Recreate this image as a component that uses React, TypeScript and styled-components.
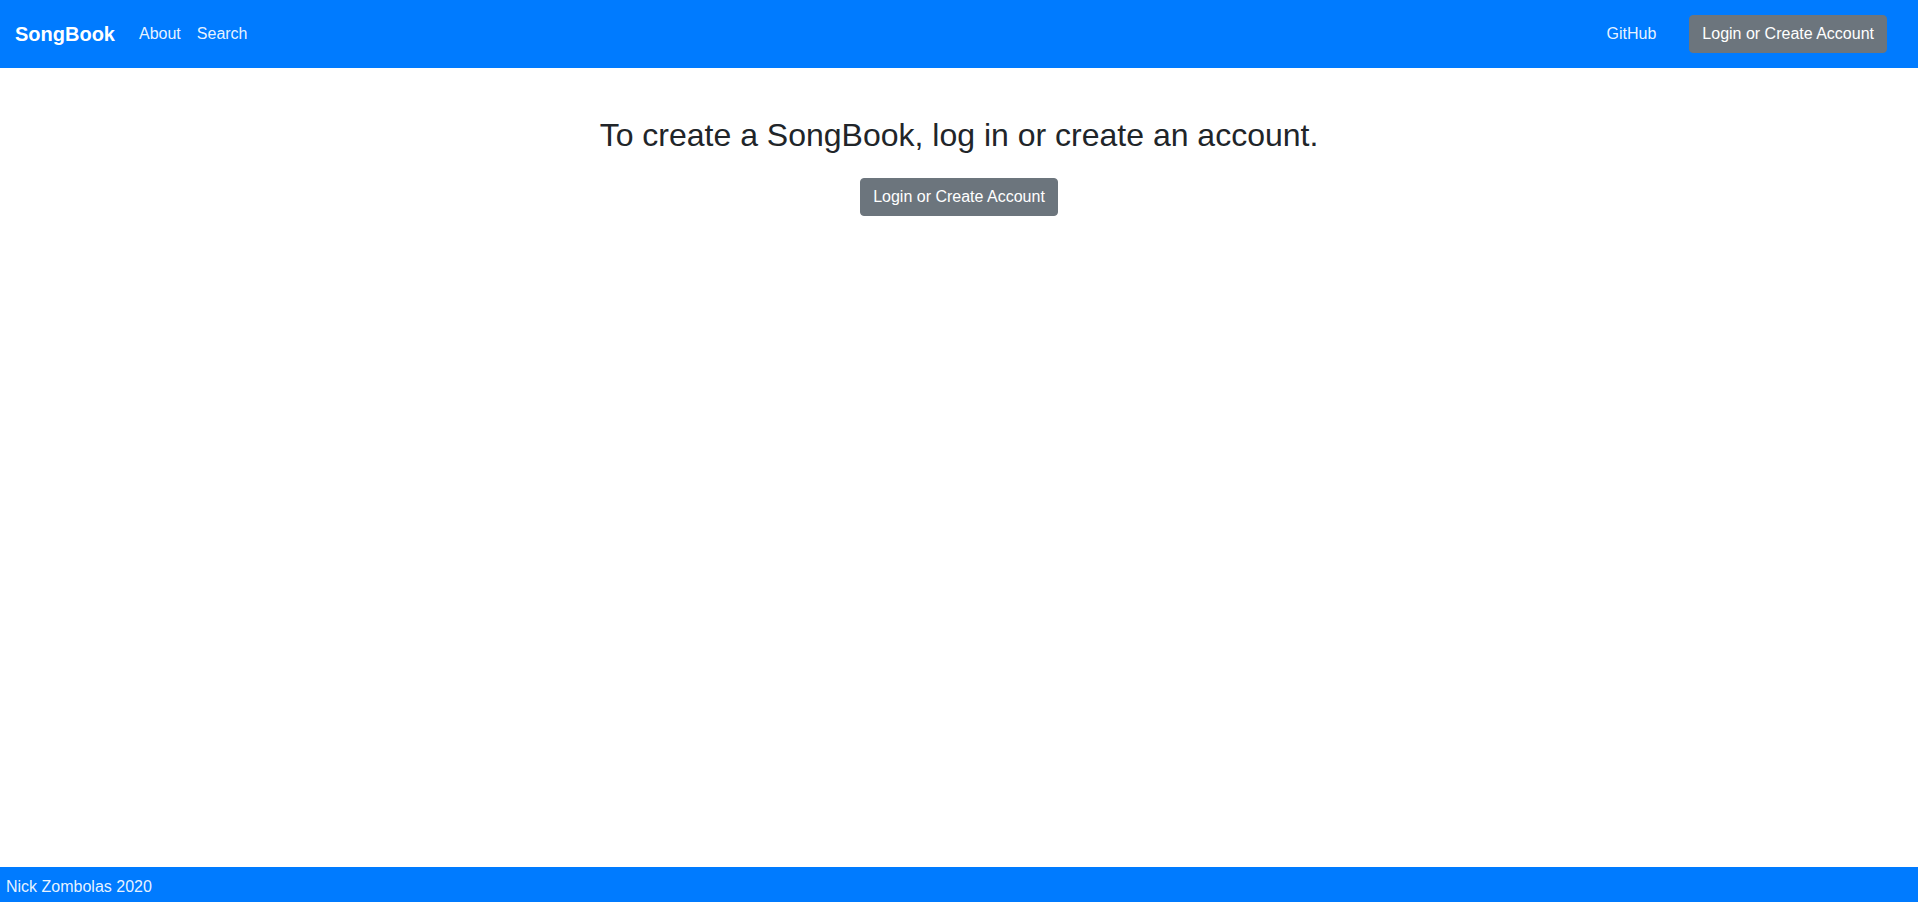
import React from "react";
import styled, { createGlobalStyle } from "styled-components";

const GlobalStyle = createGlobalStyle`
  html, body { margin: 0; padding: 0; }
  body {
    font-family: "Liberation Sans", Arial, sans-serif;
    color: #212529;
    background: #fff;
  }
  * { box-sizing: border-box; }
`;

const Page = styled.div`
  display: flex;
  flex-direction: column;
  min-height: 100vh;
`;

const Navbar = styled.nav`
  display: flex;
  align-items: center;
  height: 68px;
  padding: 0 16px 0 15px;
  background: #007bff;
`;

const Brand = styled.a`
  font-size: 20px;
  font-weight: 700;
  color: #fff;
  text-decoration: none;
  margin-right: 16px;
  line-height: 30px;
`;

const NavGroup = styled.div<{ $right?: boolean }>`
  display: flex;
  align-items: center;
  margin-left: ${(p) => (p.$right ? "auto" : "0")};
`;

const NavLink = styled.a`
  font-size: 16px;
  color: rgba(255, 255, 255, 0.92);
  text-decoration: none;
  padding: 8px;
  line-height: 24px;
`;

const Button = styled.button<{ $nav?: boolean }>`
  font-family: "Liberation Sans", Arial, sans-serif;
  font-size: 16px;
  line-height: 24px;
  height: 38px;
  padding: 6px 12px;
  color: #fff;
  background: #6c757d;
  border: 1px solid #6c757d;
  border-radius: 4px;
  cursor: pointer;
  margin: ${(p) => (p.$nav ? "0 15px 0 25px" : "0")};
`;

const Main = styled.main`
  flex: 1;
  display: flex;
  flex-direction: column;
  align-items: center;
  padding-top: 48px;
`;

const Heading = styled.h2`
  font-size: 32px;
  font-weight: 400;
  line-height: 38.4px;
  margin: 0 0 24px;
  color: #212529;
`;

const Footer = styled.footer`
  height: 35px;
  padding: 8px 6px 0;
  background: #007bff;
  color: rgba(255, 255, 255, 0.92);
  font-size: 16px;
  line-height: 24px;
`;

export default function App() {
  return (
    <Page>
      <GlobalStyle />
      <Navbar>
        <Brand href="#">SongBook</Brand>
        <NavGroup>
          <NavLink href="#">About</NavLink>
          <NavLink href="#">Search</NavLink>
        </NavGroup>
        <NavGroup $right>
          <NavLink href="#">GitHub</NavLink>
          <Button $nav>Login or Create Account</Button>
        </NavGroup>
      </Navbar>
      <Main>
        <Heading>To create a SongBook, log in or create an account.</Heading>
        <Button>Login or Create Account</Button>
      </Main>
      <Footer>Nick Zombolas 2020</Footer>
    </Page>
  );
}
